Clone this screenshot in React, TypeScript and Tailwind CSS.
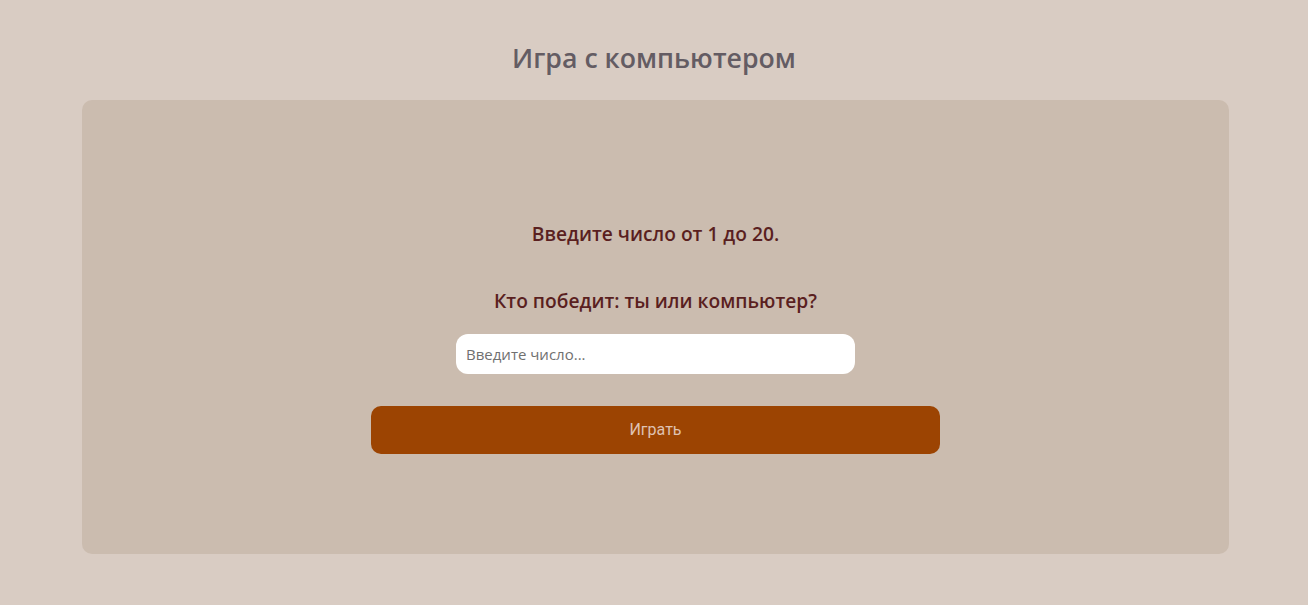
import React from "react";

export default function App() {
  return (
    <div className="min-h-[605px] w-full bg-[#d9ccc3] pt-[38px] pb-[51px] font-['Open_Sans',sans-serif]">
      {/* title */}
      <h1 className="text-center text-[26.7px] leading-[40px] font-semibold text-[#645c63]">
        Игра с компьютером
      </h1>

      {/* game card */}
      <div className="ml-[82px] mt-[22px] flex h-[454px] w-[1147px] flex-col items-center rounded-[10px] bg-[#cbbcaf] pt-[120px]">
        <p className="text-[19.2px] leading-[28px] font-semibold text-[#5a1f1f]">
          Введите число от 1 до 20.
        </p>
        <p className="mt-[39px] text-[19.2px] leading-[28px] font-semibold text-[#5a1f1f]">
          Кто победит: ты или компьютер?
        </p>
        <input
          type="text"
          placeholder="Введите число..."
          className="mt-[19px] h-[40px] w-[399px] rounded-[12px] bg-white px-[10px] font-['Open_Sans',sans-serif] text-[15px] text-[#333] outline-none placeholder:text-[#707070]"
        />
        <button className="mt-[32px] h-[48px] w-[569px] rounded-[10px] bg-[#9c4402] font-['Roboto',sans-serif] text-[16px] text-[#dfc2b2]">
          Играть
        </button>
      </div>
    </div>
  );
}
